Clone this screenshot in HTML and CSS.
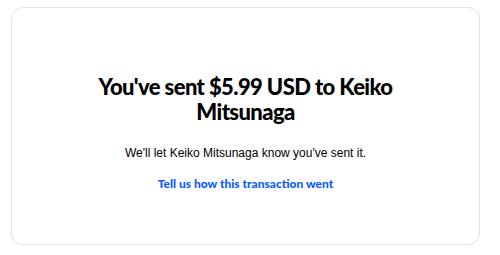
FILE: index.html
```html
<!DOCTYPE html>
<html lang="en">
  <head>
    <meta charset="UTF-8">
    <meta name="viewport" content="width=device-width, initial-scale=1.0">
    <title>Payment sent</title>
    <link rel="stylesheet" href="styles.css">
  </head>
  <body>
    <div class="card">
      <h1 class="title">You've sent $5.99 USD to Keiko Mitsunaga</h1>
      <p class="note">We'll let Keiko Mitsunaga know you've sent it.</p>
      <a class="feedback" href="#">Tell us how this transaction went</a>
    </div>
  </body>
</html>
```

FILE: styles.css
```css
html, body {
  margin: 0;
  padding: 0;
  background: #ffffff;
}

body {
  padding: 7px 0 0 11px;
  font-family: "Liberation Sans", Arial, sans-serif;
}

.card {
  box-sizing: border-box;
  width: 469px;
  height: 238px;
  border: 1px solid #e2e2e2;
  border-radius: 12px;
  display: flex;
  flex-direction: column;
  align-items: center;
  justify-content: center;
  padding: 12px 60px 0;
  text-align: center;
}

.title {
  margin: 0;
  font-family: Lato, sans-serif;
  font-weight: 900;
  font-size: 22px;
  line-height: 25px;
  letter-spacing: -0.6px;
  color: #000000;
}

.note {
  margin: 22px 0 0;
  font-size: 12px;
  line-height: 15px;
  color: #000000;
}

.feedback {
  margin-top: 15px;
  font-family: Lato, sans-serif;
  font-weight: 900;
  font-size: 12px;
  line-height: 15px;
  color: #0a5cff;
  text-decoration: none;
}
```
